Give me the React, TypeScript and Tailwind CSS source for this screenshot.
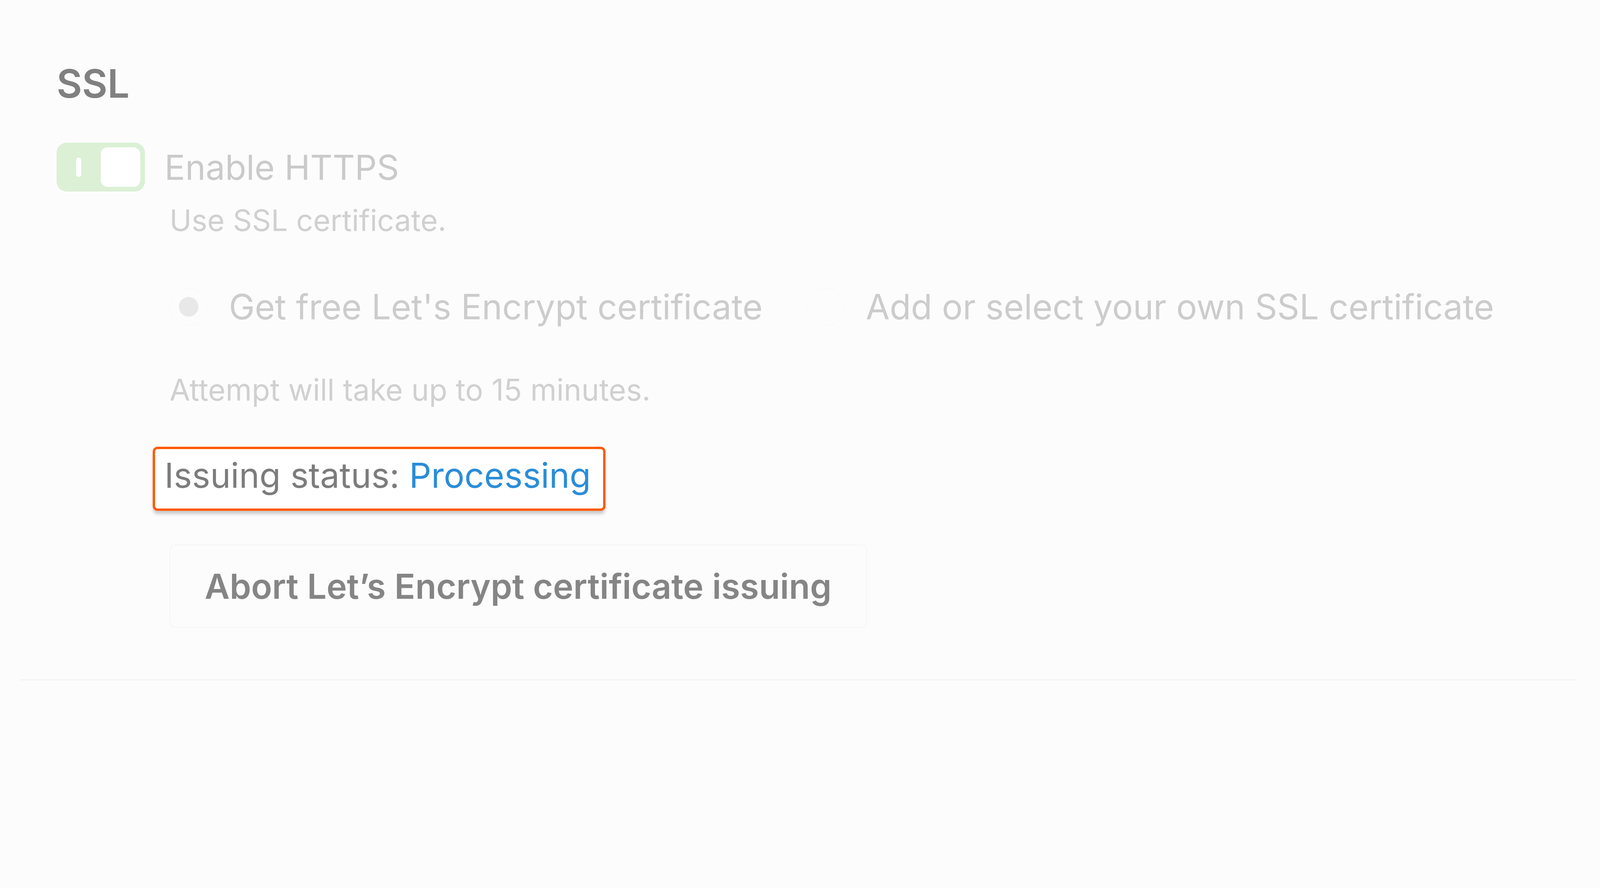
import React from 'react';

function Toggle() {
  return (
    <div className="flex h-[125px] w-[226px] shrink-0 items-center justify-between rounded-[26px] bg-[#dbf0d5] pl-[50px] pr-[12px]">
      <span className="h-[50px] w-[13px] rounded-full bg-white" />
      <span className="h-[101px] w-[101px] rounded-[17px] bg-white" />
    </div>
  );
}

function Radio({ checked, label }: { checked?: boolean; label: string }) {
  return (
    <label className="flex items-center gap-[55px]">
      <span className="flex h-[97px] w-[97px] shrink-0 items-center justify-center rounded-full border-[1.5px] border-dotted border-[#f1f1f1]">
        {checked && <span className="h-[50px] w-[50px] rounded-full bg-[#e8e8e8]" />}
      </span>
      <span className="whitespace-nowrap text-[88.7px] leading-[100px] text-[#cccccc]">{label}</span>
    </label>
  );
}

export default function App() {
  return (
    <div className="min-h-screen w-full bg-[#fcfcfc] font-['Inter','Noto_Sans',sans-serif]">
      <div className="pl-[52px] pr-[61px]">
        <div className="pl-[93px] pt-[154px]">
          <h2 className="text-[100px] font-semibold leading-[120px] text-[#808080]">SSL</h2>

          <div className="mt-[91px] flex h-[125px] items-center gap-[50px]">
            <Toggle />
            <span className="text-[88.5px] leading-[125px] text-[#cacaca]">Enable HTTPS</span>
          </div>

          <div className="ml-[289px]">
            <p className="mt-[23px] text-[76px] leading-[100px] text-[#d0d0d0]">Use SSL certificate.</p>

            <div className="mt-[122px] flex items-center gap-[112px]">
              <Radio checked label="Get free Let's Encrypt certificate" />
              <Radio label="Add or select your own SSL certificate" />
            </div>

            <p className="mt-[112px] text-[76.6px] leading-[100px] text-[#d0d0d0]">Attempt will take up to 15 minutes.</p>
          </div>

          <div className="ml-[246px] mt-[96px] inline-flex rounded-[12px] border-[6px] border-[#ff5a00] bg-white pb-[35px] pl-[24px] pr-[31px] pt-[17px] shadow-[0_9px_9px_-1px_rgba(0,0,0,0.2)]">
            <span className="whitespace-nowrap text-[88.5px] leading-[100px] text-[#7c7c7c]">
              Issuing status: <span className="text-[#2a8dd8]">Processing</span>
            </span>
          </div>

          <div>
            <button className="ml-[289px] mt-[86px] flex h-[214px] items-center whitespace-nowrap rounded-[16px] border-2 border-[#f5f5f5] px-[88px] text-[88px] font-semibold text-[#858585]">
              Abort Let’s Encrypt certificate issuing
            </button>
          </div>
        </div>

        <div className="mt-[132px] border-b-[1.5px] border-[#e6e6e6]" />
      </div>
    </div>
  );
}
